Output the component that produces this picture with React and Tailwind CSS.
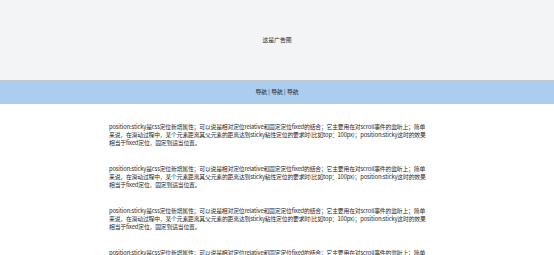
export default function App() {
  const text =
    "position:sticky是css定位新增属性；可以说是相对定位relative和固定定位fixed的结合；它主要用在对scroll事件的监听上；简单来说，在滑动过程中，某个元素距离其父元素的距离达到sticky粘性定位的要求时(比如top：100px)；position:sticky这时的效果相当于fixed定位，固定到适当位置。";
  return (
    <div className="w-full h-[255px] overflow-hidden bg-white text-[#262626] text-[5.8px] leading-[8px]" style={{ fontFamily: '"Noto Sans CJK SC", "Liberation Sans", sans-serif' }}>
      <div className="h-[80px] bg-[#f3f4f6] flex items-center justify-center">这是广告图</div>
      <div className="h-[24px] bg-[#abcdf0] border-y border-[#c3c7cc] flex items-center justify-center">导航 | 导航 | 导航</div>
      <div className="w-[320px] ml-[109px] pt-[19px] flex flex-col gap-[18px] tracking-[-0.15px]">
        <p>{text}</p>
        <p>{text}</p>
        <p>{text}</p>
        <p>{text}</p>
      </div>
    </div>
  );
}
